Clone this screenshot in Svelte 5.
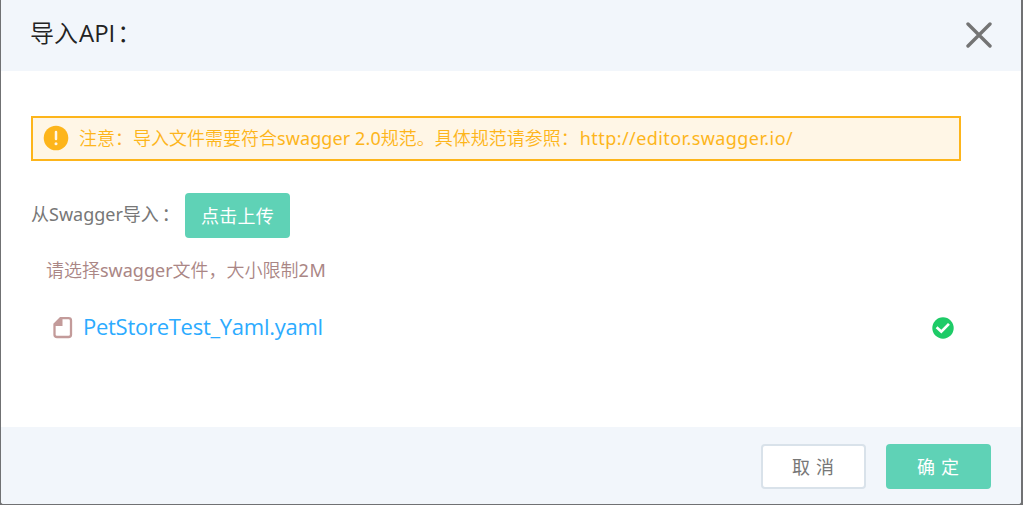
<script>
  const fileName = 'PetStoreTest_Yaml.yaml';
</script>

<main class="backdrop" lang="zh-CN">
  <section class="dialog">
    <header>
      <h1>导入<span class="api">API</span>：</h1>
      <svg class="close" width="26" height="26" viewBox="0 0 26 26"><path d="M2 2L24 24M24 2L2 24" /></svg>
    </header>

    <div class="content">
      <div class="notice">
        <svg width="26" height="26" viewBox="0 0 26 26">
          <circle cx="13" cy="13" r="12.3" fill="#fdb51b" />
          <path d="M13 7V14" stroke="#fff6e6" stroke-width="2.5" stroke-linecap="round" />
          <circle cx="13" cy="18.7" r="1.5" fill="#fff6e6" />
        </svg>
        <p>注意：导入文件需要符合<span class="spec">swagger 2.0</span>规范。具体规范请参照：<span class="url">http://editor.swagger.io/</span></p>
      </div>

      <div class="upload">
        <span class="label">从<span class="swagger">Swagger</span>导入<span class="colon">：</span></span>
        <button class="primary">点击上传</button>
      </div>

      <p class="hint">请选择<span class="hint-name">swagger</span>文件，大小限制<span class="size">2M</span></p>

      <div class="file">
        <svg class="document" width="20" height="22" viewBox="0 0 20 22">
          <path d="M7.5 1.2H15.5Q18 1.2 18 3.5V17.7Q18 20 15.5 20H4Q1.5 20 1.5 17.7V7.2Z" fill="none" stroke="#c39b9a" stroke-width="2.3" />
          <path d="M7 1L9.5 1V9H1L1 7Z" fill="#c39b9a" />
        </svg>
        <span class="name">{fileName}</span>
        <svg class="success" width="22" height="22" viewBox="0 0 22 22">
          <circle cx="11" cy="11" r="10.7" fill="#1ecb67" />
          <path d="M5.6 11.2L9.3 14.6L16 7.8" fill="none" stroke="white" stroke-width="2.7" stroke-linecap="square" />
        </svg>
      </div>
    </div>

    <footer>
      <button class="cancel">取 消</button>
      <button class="primary confirm">确 定</button>
    </footer>
  </section>
</main>

<style>
  :global(body) { margin: 0; overflow: hidden; }
  * { box-sizing: border-box; }
  .backdrop { width: 1023px; height: 505px; padding: 0 2px 1px 1px; background: #707173; font: 18px/24px "Noto Sans CJK SC", sans-serif; color: #777; }
  .dialog { height: 504px; overflow: hidden; background: white; border-radius: 0 0 3px 3px; display: flex; flex-direction: column; }
  header { height: 71px; background: #f2f6fb; padding: 0 29px 2px 29px; display: flex; align-items: center; justify-content: space-between; }
  h1, p { margin: 0; font-weight: 350; white-space: nowrap; }
  h1 { font-size: 24px; line-height: 34px; color: #222; padding-bottom: 4px; }
  p span, .swagger { font-family: "Noto Sans", sans-serif; font-weight: 400; }
  .api, .name { font-family: "Open Sans", sans-serif; font-weight: 400; }
  .api { font-size: 24px; margin: 0 2px 0 1px; }
  .close { fill: none; stroke: #747474; stroke-width: 3.4; stroke-linecap: round; }
  .content { height: 356px; padding: 45px 60px 0 30px; }
  .notice { width: 930px; height: 45px; border: 2px solid #fdb51b; background: #fff6e6; color: #fdb51b; display: flex; align-items: center; gap: 10px; padding: 0 0 2px 10px; }
  .notice p { padding-bottom: 1px; }
  .spec, .url, .swagger, .hint-name, .size { font-size: 18px; }
  .spec { letter-spacing: .1px; }
  .url { letter-spacing: .42px; margin-left: 1px; }
  .upload { height: 45px; margin-top: 32px; display: flex; align-items: center; }
  .label { width: 154px; white-space: nowrap; padding-bottom: 4px; }
  .colon { margin-left: 3px; }
  button { width: 105px; height: 45px; border: 0; border-radius: 4px; padding: 0 0 2px; font: 18px/24px "Noto Sans CJK SC", sans-serif; letter-spacing: .3px; }
  .primary { background: #5fd2b6; color: white; }
  .hint { margin: 19px 0 0 15px; color: #aa8685; }
  .size { letter-spacing: .7px; }
  .file { height: 32px; margin-top: 30px; padding: 0 7px 0 22px; display: flex; align-items: center; }
  .name { font-size: 22px; line-height: 32px; color: #2cabff; margin-left: 10px; padding-bottom: 4px; letter-spacing: -.27px; }
  .success { margin-left: auto; }
  footer { height: 77px; padding: 17px 30px 0; background: #f2f6fb; display: flex; justify-content: flex-end; gap: 20px; }
  footer button { letter-spacing: 1px; }
  .cancel { background: white; color: #777; border: 2px solid #d9e2ea; }
</style>
